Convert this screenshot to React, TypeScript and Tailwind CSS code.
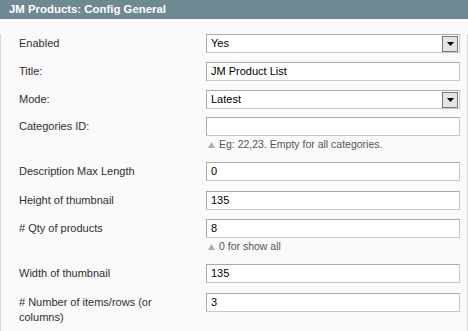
import React from 'react';

type Row = {
  label: string;
  value: string;
  kind: 'select' | 'input';
  top: string;
  note?: string;
};

const rows: Row[] = [
  { label: 'Enabled', value: 'Yes', kind: 'select', top: 'mt-[14px]' },
  { label: 'Title:', value: 'JM Product List', kind: 'input', top: 'mt-[9px]' },
  { label: 'Mode:', value: 'Latest', kind: 'select', top: 'mt-[9px]' },
  {
    label: 'Categories ID:',
    value: '',
    kind: 'input',
    top: 'mt-[8px]',
    note: 'Eg: 22,23. Empty for all categories.',
  },
  { label: 'Description Max Length', value: '0', kind: 'input', top: 'mt-[9px]' },
  { label: 'Height of thumbnail', value: '135', kind: 'input', top: 'mt-[10px]' },
  {
    label: '# Qty of products',
    value: '8',
    kind: 'input',
    top: 'mt-[9px]',
    note: '0 for show all',
  },
  { label: 'Width of thumbnail', value: '135', kind: 'input', top: 'mt-[9px]' },
  { label: '# Number of items/rows (or columns)', value: '3', kind: 'input', top: 'mt-[10px]' },
];

const SelectBox = ({ value }: { value: string }) => {
  return (
    <div className="h-[19px] w-[254px] flex items-center bg-white border border-t-[#aaa] border-l-[#aaa] border-r-[#c8c8c8] border-b-[#c8c8c8]">
      <span className="flex-1 pl-[4px] text-[11px] text-black leading-none">{value}</span>
      <div className="h-[16px] w-[16px] mr-[1px] flex items-center justify-center bg-[#e4e4e4] border border-[#777]">
        <svg width="7" height="4" viewBox="0 0 7 4">
          <path d="M0 0H7L3.5 4Z" fill="#000" />
        </svg>
      </div>
    </div>
  );
};

const TextBox = ({ value }: { value: string }) => {
  return (
    <div className="h-[19px] w-[254px] flex items-center bg-white border border-t-[#aaa] border-l-[#aaa] border-r-[#c8c8c8] border-b-[#c8c8c8]">
      <span className="pl-[4px] text-[11px] text-black leading-none">{value}</span>
    </div>
  );
};

const App = () => {
  return (
    <div
      className="w-[468px] h-[331px] overflow-hidden bg-[#fafafa] text-[#2f2f2f]"
      style={{ fontFamily: '"Liberation Sans", Arial, sans-serif' }}
    >
      <div className="h-[20px] bg-[#6f8992] border-b border-[#fafafa] flex items-center pl-[9px]">
        <span className="text-white font-bold text-[11.4px] leading-none">JM Products: Config General</span>
      </div>
      <div className="h-[311px] border-l border-r border-[#d6d6d6]">
        {rows.map((row) => (
          <div key={row.label} className={`flex ${row.top}`}>
            <div className="w-[205px] pl-[18px] pr-[26px] pt-[2px] text-[11px] leading-[15px]">
              {row.label}
            </div>
            <div className="flex flex-col">
              {row.kind === 'select' ? <SelectBox value={row.value} /> : <TextBox value={row.value} />}
              {row.note && (
                <div className="h-[17px] flex items-center gap-[4px] pl-[2px] text-[10.5px] text-[#555]">
                  <svg width="7" height="6" viewBox="0 0 7 6">
                    <path d="M3.5 0L7 6H0Z" fill="#a7b0b3" />
                  </svg>
                  <span>{row.note}</span>
                </div>
              )}
            </div>
          </div>
        ))}
      </div>
    </div>
  );
};

export default App;
